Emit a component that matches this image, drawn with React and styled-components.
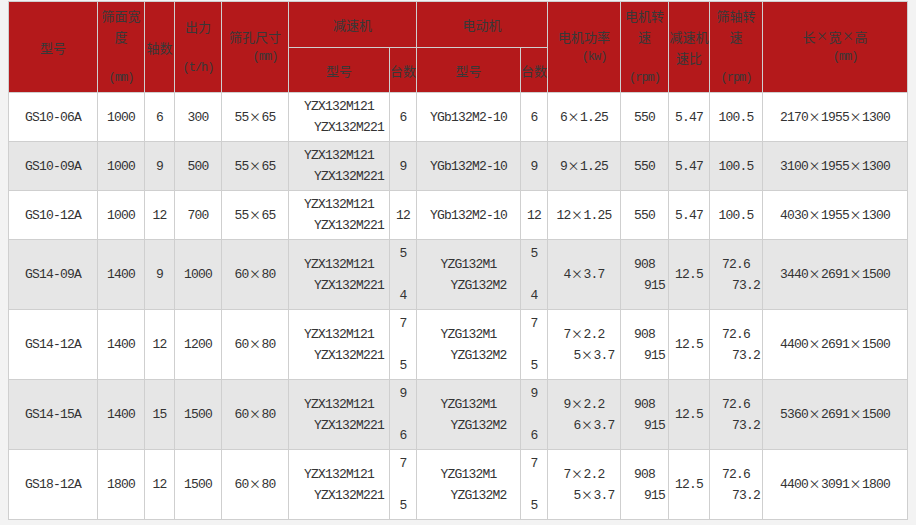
import styled, { createGlobalStyle } from "styled-components";

const GlobalStyle = createGlobalStyle`
  body {
    margin: 1px 0 0 8px;
    background: #f3f3f3;
  }
`;

const widths = [89, 47, 30, 47, 67, 101, 27, 104, 27, 73, 48, 41, 53, 145];

const rows = [
  { model: "GS10-06A", width: "1000", axes: "6", cap: "300", hole: "55×65", red: ["YZX132M121", " YZX132M221"], redN: ["6"], mot: ["YGb132M2-10"], motN: ["6"], power: ["6×1.25"], rpm: ["550"], ratio: "5.47", srpm: ["100.5"], size: "2170×1955×1300" },
  { model: "GS10-09A", width: "1000", axes: "9", cap: "500", hole: "55×65", red: ["YZX132M121", " YZX132M221"], redN: ["9"], mot: ["YGb132M2-10"], motN: ["9"], power: ["9×1.25"], rpm: ["550"], ratio: "5.47", srpm: ["100.5"], size: "3100×1955×1300" },
  { model: "GS10-12A", width: "1000", axes: "12", cap: "700", hole: "55×65", red: ["YZX132M121", " YZX132M221"], redN: ["12"], mot: ["YGb132M2-10"], motN: ["12"], power: ["12×1.25"], rpm: ["550"], ratio: "5.47", srpm: ["100.5"], size: "4030×1955×1300" },
  { model: "GS14-09A", width: "1400", axes: "9", cap: "1000", hole: "60×80", red: ["YZX132M121", " YZX132M221"], redN: ["5", "", "4"], mot: ["YZG132M1", " YZG132M2"], motN: ["5", "", "4"], power: ["4×3.7"], rpm: ["908", " 915"], ratio: "12.5", srpm: ["72.6", " 73.2"], size: "3440×2691×1500" },
  { model: "GS14-12A", width: "1400", axes: "12", cap: "1200", hole: "60×80", red: ["YZX132M121", " YZX132M221"], redN: ["7", "", "5"], mot: ["YZG132M1", " YZG132M2"], motN: ["7", "", "5"], power: ["7×2.2", " 5×3.7"], rpm: ["908", " 915"], ratio: "12.5", srpm: ["72.6", " 73.2"], size: "4400×2691×1500" },
  { model: "GS14-15A", width: "1400", axes: "15", cap: "1500", hole: "60×80", red: ["YZX132M121", " YZX132M221"], redN: ["9", "", "6"], mot: ["YZG132M1", " YZG132M2"], motN: ["9", "", "6"], power: ["9×2.2", " 6×3.7"], rpm: ["908", " 915"], ratio: "12.5", srpm: ["72.6", " 73.2"], size: "5360×2691×1500" },
  { model: "GS18-12A", width: "1800", axes: "12", cap: "1500", hole: "60×80", red: ["YZX132M121", " YZX132M221"], redN: ["7", "", "5"], mot: ["YZG132M1", " YZG132M2"], motN: ["7", "", "5"], power: ["7×2.2", " 5×3.7"], rpm: ["908", " 915"], ratio: "12.5", srpm: ["72.6", " 73.2"], size: "4400×3091×1800" },
];

// split on × so the sign gets full-width room like the original
const withTimes = (text) =>
  text.split("×").flatMap((part, i) => (i === 0 ? [part] : [<Times key={i}>×</Times>, part]));

const Lines = ({ lines }) =>
  lines.map((l, i) => {
    const shift = l.startsWith(" ");
    const t = l.trim();
    return (
      <Line key={i} $shift={shift}>
        {t === "" ? "\u00a0" : t.startsWith("(") ? <Unit>{t}</Unit> : withTimes(t)}
      </Line>
    );
  });

const App = () => {
  return (
    <>
      <GlobalStyle />
      <Table>
        <colgroup>
          {widths.map((w, i) => (
            <Col key={i} $w={w} />
          ))}
        </colgroup>
        <thead>
          <GroupRow>
            <Th rowSpan={2}><Lines lines={["型号"]} /></Th>
            <Th rowSpan={2}><Lines lines={["筛面宽", "度", "", "(mm)"]} /></Th>
            <Th rowSpan={2}><Lines lines={["轴数"]} /></Th>
            <Th rowSpan={2}><Lines lines={["出力", "", "(t/h)"]} /></Th>
            <Th rowSpan={2}><Lines lines={["筛孔尺寸", " (mm)"]} /></Th>
            <Th colSpan={2}><Lines lines={["减速机"]} /></Th>
            <Th colSpan={2}><Lines lines={["电动机"]} /></Th>
            <Th rowSpan={2}><Lines lines={["电机功率", " (kw)"]} /></Th>
            <Th rowSpan={2}><Lines lines={["电机转", "速", "", "(rpm)"]} /></Th>
            <Th rowSpan={2}><Lines lines={["减速机", "速比"]} /></Th>
            <Th rowSpan={2}><Lines lines={["筛轴转", "速", "", "(rpm)"]} /></Th>
            <Th rowSpan={2}><Lines lines={["长×宽×高", " (mm)"]} /></Th>
          </GroupRow>
          <tr>
            <Th><Lines lines={["型号"]} /></Th>
            <Th><Lines lines={["台数"]} /></Th>
            <Th><Lines lines={["型号"]} /></Th>
            <Th><Lines lines={["台数"]} /></Th>
          </tr>
        </thead>
        <tbody>
          {rows.map((r, i) => (
            <Row key={r.model} $alt={i % 2 === 1}>
              <Td><Lines lines={[r.model]} /></Td>
              <Td><Lines lines={[r.width]} /></Td>
              <Td><Lines lines={[r.axes]} /></Td>
              <Td><Lines lines={[r.cap]} /></Td>
              <Td><Lines lines={[r.hole]} /></Td>
              <Td><Lines lines={r.red} /></Td>
              <Td><Lines lines={r.redN} /></Td>
              <Td><Lines lines={r.mot} /></Td>
              <Td><Lines lines={r.motN} /></Td>
              <Td><Lines lines={r.power} /></Td>
              <Td><Lines lines={r.rpm} /></Td>
              <Td><Lines lines={[r.ratio]} /></Td>
              <Td><Lines lines={r.srpm} /></Td>
              <Td><Lines lines={[r.size]} /></Td>
            </Row>
          ))}
        </tbody>
      </Table>
    </>
  );
};

export default App;

const Table = styled.table`
  border-collapse: collapse;
  table-layout: fixed;
  width: 899px;
`;

const Col = styled.col`
  width: ${(p) => p.$w}px;
`;

const GroupRow = styled.tr`
  height: 46px;
`;

const Th = styled.th`
  background: #b4191b;
  border: 1px solid #cfcfcf;
  padding: 3px 0;
  font-family: "Noto Sans CJK SC", sans-serif;
  font-size: 13px;
  font-weight: normal;
  line-height: 21px;
  color: #383838;
  text-align: center;
  vertical-align: middle;
`;

const Row = styled.tr`
  background: ${(p) => (p.$alt ? "#e6e6e6" : "#ffffff")};
`;

const Td = styled.td`
  border: 1px solid #cfcfcf;
  padding: 3px 0;
  font-family: "Liberation Mono", monospace;
  font-size: 13px;
  letter-spacing: -0.8px;
  line-height: 21px;
  color: #333333;
  text-align: center;
  vertical-align: middle;
`;

const Line = styled.div`
  height: 21px;
  white-space: nowrap;
  padding-left: ${(p) => (p.$shift ? 20 : 0)}px;
`;

const Times = styled.span`
  display: inline-block;
  width: 13px;
  letter-spacing: 0;
  text-align: center;
  vertical-align: top;
  font-family: "Noto Sans CJK SC", sans-serif;
  font-size: 12px;
  line-height: 20px;
`;

const Unit = styled.span`
  display: inline-block;
  vertical-align: top;
  font-family: "Liberation Mono", monospace;
  font-size: 12px;
  letter-spacing: -1px;
`;
